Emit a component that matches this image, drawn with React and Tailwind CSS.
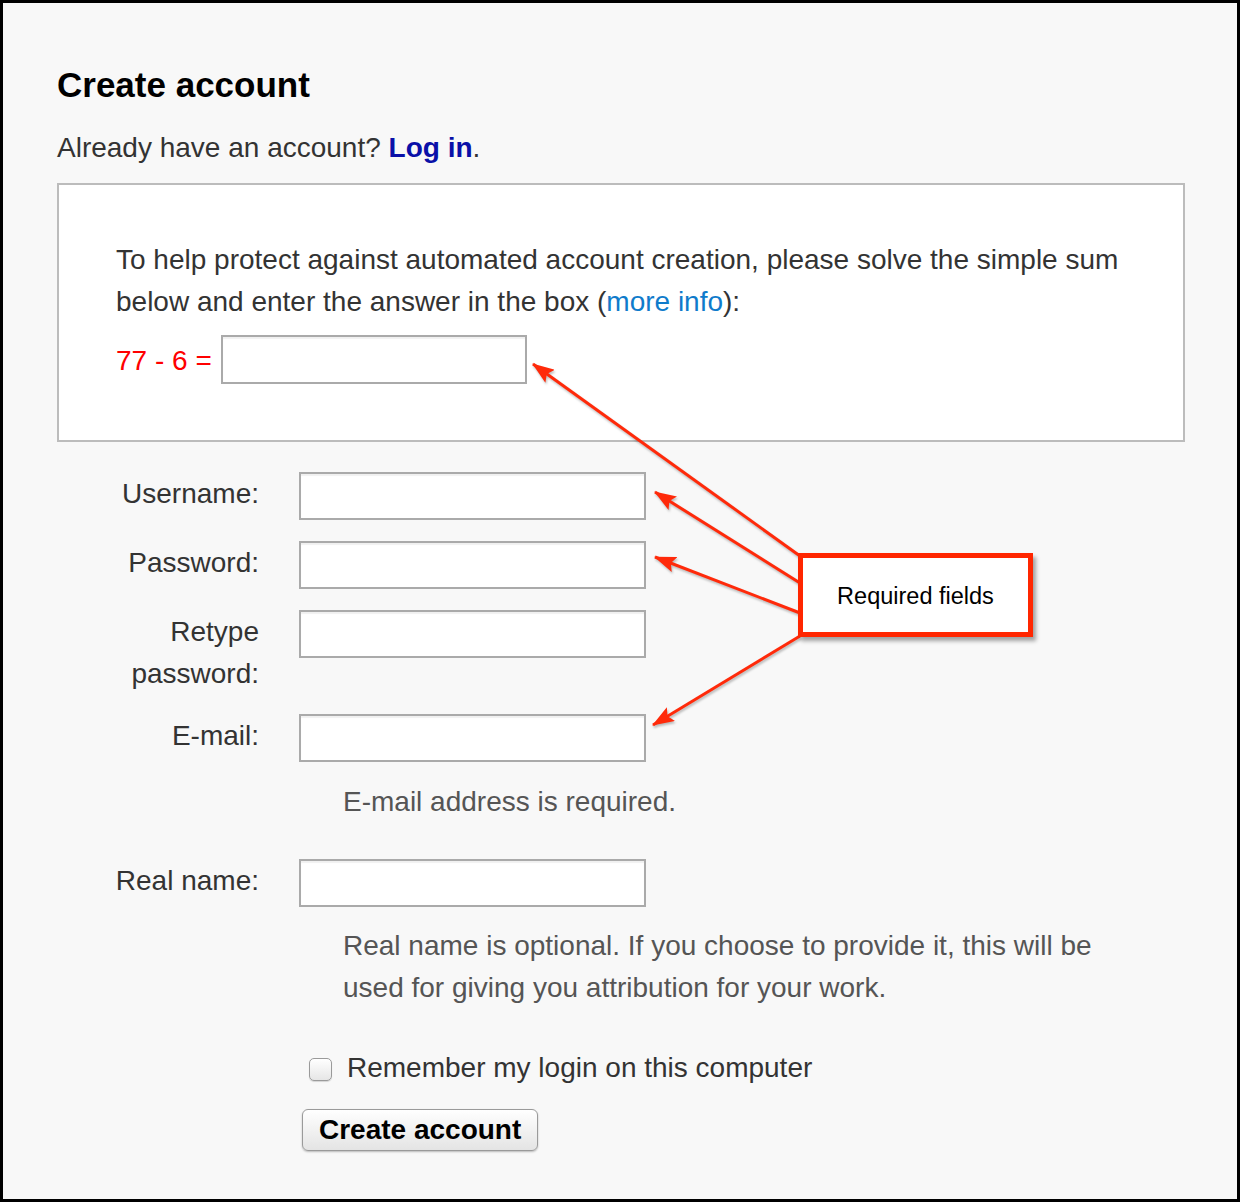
import React from "react";

const fields = [
  { label: ["Username:"], mt: "mt-[29px]" },
  { label: ["Password:"], mt: "mt-[20px]" },
  { label: ["Retype", "password:"], mt: "mt-[20px]" },
  { label: ["E-mail:"], mt: "mt-[18px]" },
];

function TextInput() {
  return (
    <input
      type="text"
      className="mt-px h-[48px] w-[347px] border-2 border-[#aaaaaa] bg-white shadow-[inset_0_2px_1px_rgba(0,0,0,0.06)] outline-none"
    />
  );
}

function FieldRow({ label, mt }) {
  return (
    <div className={`flex items-start ${mt}`}>
      <label className="w-[202px] pt-[2px] text-right text-[28px] leading-[42px] text-[#333]">
        {label.map((l, i) => (
          <span key={i} className="block">
            {l}
          </span>
        ))}
      </label>
      <div className="ml-[40px]">
        <TextInput />
      </div>
    </div>
  );
}

function Arrows() {
  // annotation lines from the "Required fields" note to each input
  const lines = [
    [800, 556, 533, 364],
    [800, 583, 655, 492],
    [800, 613, 655, 557],
    [800, 636, 653, 725],
  ];
  return (
    <svg
      className="pointer-events-none absolute left-0 top-0 drop-shadow-[1px_2px_1px_rgba(0,0,0,0.25)]"
      width="1234"
      height="1196"
      viewBox="3 3 1234 1196"
    >
      <defs>
        <marker
          id="head"
          viewBox="0 0 22 16"
          refX="21"
          refY="8"
          markerWidth="22"
          markerHeight="16"
          markerUnits="userSpaceOnUse"
          orient="auto"
        >
          <path d="M0,0 L22,8 L0,16 L4,8 z" fill="#ff2a0a" />
        </marker>
      </defs>
      {lines.map(([x1, y1, x2, y2], i) => (
        <line
          key={i}
          x1={x1}
          y1={y1}
          x2={x2}
          y2={y2}
          stroke="#ff2a0a"
          strokeWidth="3"
          markerEnd="url(#head)"
        />
      ))}
    </svg>
  );
}

export default function App() {
  return (
    <div className="relative box-border h-[1202px] w-[1240px] border-[3px] border-black bg-[#f8f8f8] font-['Liberation_Sans',Arial,sans-serif] text-[#333]">
      <div className="pl-[54px] pr-[52px] pt-[62px]">
        <h1 className="text-[35px] font-bold leading-[40px] text-black">Create account</h1>
        <p className="mt-[22px] text-[28px] leading-[42px]">
          Already have an account?{" "}
          <a href="#" className="font-bold text-[#0a10a8]">
            Log in
          </a>
          .
        </p>

        {/* captcha box */}
        <div className="mt-[14px] border-2 border-[#bcbcbc] bg-white pb-[56px] pl-[57px] pt-[54px]">
          <p className="text-[28px] leading-[42px] text-[#333]">
            To help protect against automated account creation, please solve the simple sum
            <br />
            below and enter the answer in the box (
            <a href="#" className="text-[#0f7bcb]">
              more info
            </a>
            ):
          </p>
          <div className="mt-[12px] flex items-center gap-[9px]">
            <span className="mt-[2px] text-[28px] leading-[42px] text-[#ff0000]">77 - 6 =</span>
            <input
              type="text"
              className="h-[49px] w-[306px] border-2 border-[#aaaaaa] bg-white shadow-[inset_0_2px_1px_rgba(0,0,0,0.06)] outline-none"
            />
          </div>
        </div>

        {/* form fields */}
        {fields.map((f, i) => (
          <FieldRow key={i} label={f.label} mt={f.mt} />
        ))}
        <p className="mt-[19px] pl-[286px] text-[28px] leading-[42px] text-[#555]">
          E-mail address is required.
        </p>

        <FieldRow label={["Real name:"]} mt="mt-[35px]" />
        <p className="mt-[18px] pl-[286px] text-[28px] leading-[42px] text-[#555]">
          Real name is optional. If you choose to provide it, this will be
          <br />
          used for giving you attribution for your work.
        </p>

        <label className="mt-[38px] flex items-start pl-[252px] text-[28px] leading-[42px] text-[#333]">
          <span className="mt-[11px] box-border h-[23px] w-[23px] rounded-[5px] border border-[#9a9a9a] bg-gradient-to-b from-white to-[#e6e6e6] shadow-[0_1px_1px_rgba(0,0,0,0.15)]" />
          <span className="ml-[15px]">Remember my login on this computer</span>
        </label>

        <div className="mt-[20px] pl-[245px]">
          <button
            type="button"
            className="h-[42px] rounded-[6px] border border-[#9a9a9a] bg-gradient-to-b from-white to-[#e4e4e4] px-[16px] text-[28px] font-bold leading-[38px] text-black shadow-[0_1px_2px_rgba(0,0,0,0.25)]"
          >
            Create account
          </button>
        </div>
      </div>

      <Arrows />

      {/* annotation note */}
      <div className="absolute left-[795px] top-[550px] flex h-[84px] w-[235px] items-center justify-center border-[5px] border-[#ff2600] bg-white shadow-[3px_4px_4px_rgba(0,0,0,0.35)]">
        <span className="mt-[2px] text-[23.5px] leading-[28px] text-black">Required fields</span>
      </div>
    </div>
  );
}
